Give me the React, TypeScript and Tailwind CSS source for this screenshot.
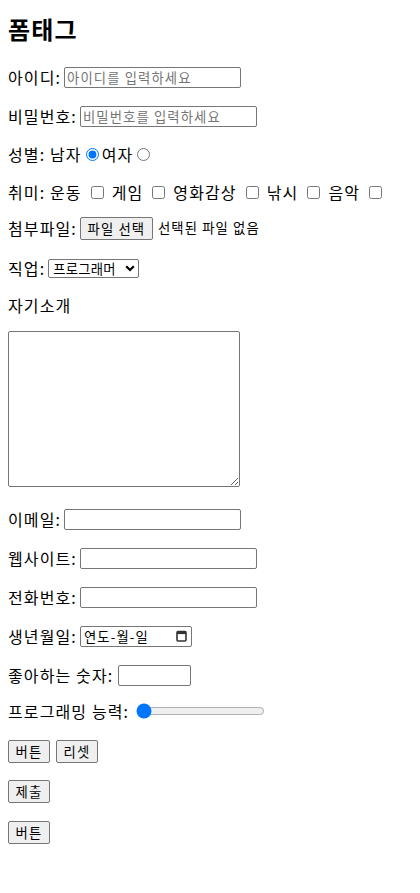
import React from 'react'

const font = { fontFamily: '"Noto Sans CJK KR", "Liberation Sans", sans-serif' }

const inputCls =
  'h-[21px] border border-[#767676] rounded-[2px] bg-white px-[2px] text-[13.33px] leading-[17px] text-black placeholder:text-[#757575] outline-none'

const btnCls =
  'h-[23px] border border-[#767676] rounded-[2px] bg-[#efefef] px-[6px] text-[13.33px] leading-[19px] text-black'

function Row({ mt, children }: { mt: string; children: React.ReactNode }) {
  return <div className={`${mt} flex h-[24px] items-center whitespace-nowrap`}>{children}</div>
}

function Check() {
  return <input type="checkbox" className="m-0 ml-[9px] mr-[8px] h-[13px] w-[13px]" />
}

export default function App() {
  return (
    <div className="min-h-[893px] w-full bg-white px-2 text-[16px] leading-[22px] tracking-[0.07em] text-black" style={font}>
      <h1 className="pt-[14px] text-[24px] font-bold leading-[29px] tracking-[0.05em]">폼태그</h1>

      <Row mt="mt-[22px]">
        <span>아이디:</span>
        <input className={`${inputCls} ml-[3px] w-[177px]`} placeholder="아이디를 입력하세요" />
      </Row>

      <Row mt="mt-[15px]">
        <span>비밀번호:</span>
        <input type="password" className={`${inputCls} ml-[3px] w-[177px]`} placeholder="비밀번호를 입력하세요" />
      </Row>

      <Row mt="mt-[14px]">
        <span>성별: 남자</span>
        <input type="radio" name="g" defaultChecked className="m-0 ml-[4px] mr-[3px] h-[13px] w-[13px]" />
        <span>여자</span>
        <input type="radio" name="g" className="m-0 ml-[4px] h-[13px] w-[13px]" />
      </Row>

      <Row mt="mt-[14px]">
        <span>취미: 운동</span>
        <Check />
        <span>게임</span>
        <Check />
        <span>영화감상</span>
        <Check />
        <span>낚시</span>
        <Check />
        <span>음악</span>
        <Check />
      </Row>

      <Row mt="mt-[12px]">
        <span>첨부파일:</span>
        <button className={`${btnCls} ml-[3px] w-[73px] px-0`}>파일 선택</button>
        <span className="ml-[5px] text-[13.33px]">선택된 파일 없음</span>
      </Row>

      <Row mt="mt-[16px]">
        <span>직업:</span>
        <div className="ml-[3px] flex h-[19px] w-[91px] items-center justify-between rounded-[2px] border border-[#767676] pl-[4px] pr-[3px] text-[13.33px] leading-[17px]">
          <span className="tracking-[0.02em]">프로그래머</span>
          <svg width="10" height="7" viewBox="0 0 10 7">
            <path d="M1.2 1.2 L5 5 L8.8 1.2" fill="none" stroke="black" strokeWidth="2.2" />
          </svg>
        </div>
      </Row>

      <Row mt="mt-[13px]">
        <span>자기소개</span>
      </Row>

      <textarea className="mt-[14px] block h-[156px] w-[232px] resize rounded-[2px] border border-[#767676] bg-white p-[2px] text-[13.33px] outline-none" />

      <Row mt="mt-[20px]">
        <span>이메일:</span>
        <input type="email" className={`${inputCls} ml-[3px] w-[177px]`} />
      </Row>

      <Row mt="mt-[15px]">
        <span>웹사이트:</span>
        <input type="url" className={`${inputCls} ml-[3px] w-[177px]`} />
      </Row>

      <Row mt="mt-[15px]">
        <span>전화번호:</span>
        <input type="tel" className={`${inputCls} ml-[3px] w-[177px]`} />
      </Row>

      <Row mt="mt-[15px]">
        <span>생년월일:</span>
        <div className="ml-[3px] flex h-[21px] w-[112px] items-center justify-between rounded-[2px] border border-[#767676] pl-[3px] pr-[4px] text-[13.33px] leading-[17px]">
          <span>연도-월-일</span>
          <svg width="11" height="12" viewBox="0 0 11 12">
            <rect x="1" y="1.5" width="9" height="9.5" rx="1" fill="none" stroke="#333" strokeWidth="1.6" />
            <rect x="1" y="1.5" width="9" height="2.6" fill="#333" />
          </svg>
        </div>
      </Row>

      <Row mt="mt-[15px]">
        <span>좋아하는 숫자:</span>
        <input type="number" className={`${inputCls} ml-[5px] w-[73px]`} />
      </Row>

      <Row mt="mt-[12px]">
        <span>프로그래밍 능력:</span>
        <input type="range" defaultValue={0} className="m-0 ml-[7px] w-[129px]" />
      </Row>

      <div className="mt-[16px] flex h-[24px] items-center gap-[6px]">
        <button className={`${btnCls} w-[42px] px-0`}>버튼</button>
        <button className={`${btnCls} w-[42px] px-0`}>리셋</button>
      </div>

      <div className="mt-[16px] flex h-[24px] items-center">
        <button className={`${btnCls} w-[42px] px-0`}>제출</button>
      </div>

      <div className="mt-[17px] flex h-[24px] items-center">
        <button className={`${btnCls} w-[42px] px-0`}>버튼</button>
      </div>
    </div>
  )
}
